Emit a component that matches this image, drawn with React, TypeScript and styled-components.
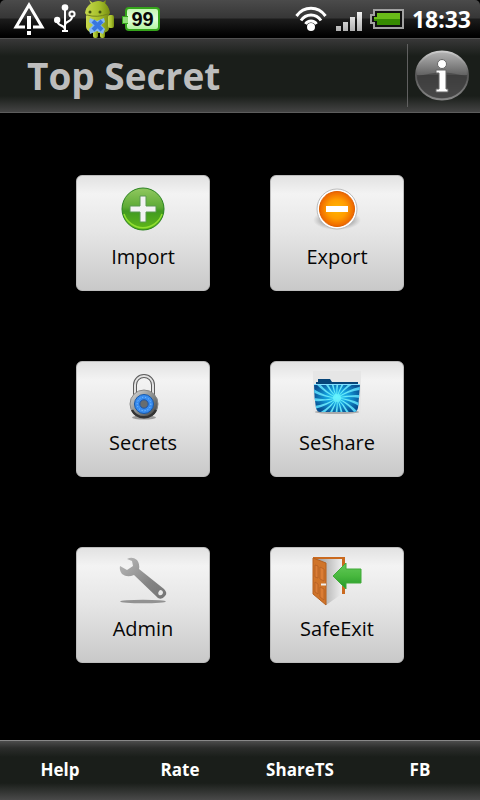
import React from "react";
import styled, { createGlobalStyle } from "styled-components";

const GlobalStyle = createGlobalStyle`
  * { box-sizing: border-box; }
  body { margin: 0; background: #000; font-family: "Open Sans", "Noto Sans", sans-serif; }
`;

const Screen = styled.div`
  display: flex;
  flex-direction: column;
  min-height: 100vh;
  background: #000;
`;

const StatusBar = styled.div`
  display: flex;
  align-items: center;
  justify-content: space-between;
  height: 38px;
  padding: 0 9px 0 13px;
  border-radius: 5px 5px 0 0;
  background: linear-gradient(#4b4b4b 0, #363636 18px, #1c1c1c 19px, #000 36px);
`;

const StatusGroup = styled.div<{ $gap: number }>`
  display: flex;
  align-items: center;
  gap: ${(p) => p.$gap}px;
  svg { display: block; flex: none; }
`;

const Level = styled.span`
  position: relative;
  width: 35px;
  height: 24px;
  border: 2px solid #35a51b;
  border-radius: 4px;
  background: linear-gradient(#c4f5b4, #e2ffda 50%, #b3f3a2);
  color: #080808;
  font: bold 20px/20px "Liberation Sans", sans-serif;
  text-align: center;
  &::before {
    content: "";
    position: absolute;
    left: -5px;
    top: 7px;
    width: 5px;
    height: 6px;
    border: 1px solid #35a51b;
    border-right: 0;
    background: #8fdf78;
  }
`;

const Clock = styled.time`
  color: #fff;
  font: bold 23px/38px "Noto Sans", sans-serif;
`;

const TitleBar = styled.header`
  display: flex;
  align-items: center;
  justify-content: space-between;
  height: 75px;
  padding: 0 11px 0 27px;
  border-top: 1px solid #515151;
  border-bottom: 1px solid #5d5d5d;
  background: linear-gradient(#383838 0, #1a1e1a 17px, #1a1e1a 57px, #444 100%);
`;

const Title = styled.h1`
  margin: 0;
  color: #bdbdbd;
  font: bold 37px/52px "Open Sans", sans-serif;
`;

const InfoButton = styled.button`
  display: flex;
  align-items: center;
  height: 63px;
  padding: 0 0 0 7px;
  border: 0;
  border-left: 1px solid #606060;
  background: none;
`;

const Main = styled.main`
  flex: 1;
  display: grid;
  grid-template-columns: 134px 134px;
  grid-auto-rows: 116px;
  justify-content: center;
  gap: 70px 60px;
  padding: 62px 16px;
`;

const Tile = styled.button`
  display: flex;
  flex-direction: column;
  align-items: center;
  gap: 8px;
  padding: 8px 0 0;
  border: 1px solid #bdbdbd;
  border-radius: 6px;
  background: linear-gradient(#e2e2e2 0, #f3f3f3 18px, #e6e6e6 48%, #c9c9c9 100%);
  color: #060606;
  font: 20px/30px "Open Sans", sans-serif;
  svg { display: block; }
`;

const Footer = styled.nav`
  display: grid;
  grid-template-columns: repeat(4, 1fr);
  height: 60px;
  border-top: 1px solid #888;
  background: linear-gradient(#4c4c4c 0, #2b2d2b 7px, #1a1e1a 16px, #1a1e1a 42px, #4a4a4a 100%);
`;

const FooterLink = styled.a`
  color: #fff;
  font: bold 17px/58px "Open Sans", sans-serif;
  text-align: center;
  text-decoration: none;
`;

const WarningIcon = () => (
  <svg width="32" height="34" viewBox="0 0 32 34">
    <path d="M12 25H3L16 3l13 22h-9" fill="none" stroke="#fff" strokeWidth="3" />
    <path d="M14 14h4v13h-4zM14 29h4v4h-4z" fill="#fff" />
  </svg>
);

const UsbIcon = () => (
  <svg width="22" height="30" viewBox="0 0 22 30">
    <g fill="none" stroke="#fff" strokeWidth="2">
      <path d="M11 4v23M3 16c0 7 8 4 8 10M18 13c0 5-7 4-7 8" />
      <circle cx="18" cy="10" r="2.6" />
    </g>
    <g fill="#fff">
      <circle cx="11" cy="3.500" r="3.300" />
      <circle cx="3.200" cy="16" r="3.200" />
      <path d="M8 26h6v2H8z" />
    </g>
  </svg>
);

const RobotIcon = () => (
  <svg width="31" height="38" viewBox="0 0 31 38">
    <defs>
      <linearGradient id="robot" x1="0" x2="1">
        <stop offset="0" stopColor="#c7d94d" />
        <stop offset="0.6" stopColor="#a3bd29" />
        <stop offset="1" stopColor="#768c12" />
      </linearGradient>
    </defs>
    <g fill="url(#robot)">
      <path d="M4 0l4 3 1 2-2 1zM21 0l-4 3 1 3 2-1z" />
      <path d="M0 13C1 6 6 2 13 1c7 0 11 5 12 12l-3 4H3z" />
      <path d="M1 16l2-2h20l1 3v12c-1 3-4 4-11 4S2 32 1 27z" />
      <rect x="23" y="15" width="6" height="13" rx="2" />
      <rect x="8" y="29" width="5" height="9" rx="2" />
      <rect x="15" y="29" width="5" height="9" rx="2" />
    </g>
    <path d="M2 15q10 3 21-1" stroke="#74841d" fill="none" />
    <circle cx="5" cy="12" r="1.500" fill="#405010" />
    <circle cx="15" cy="12" r="1.500" fill="#405010" />
    <path d="M5 18l7 3 7-3 1 4-4 3 4 4-2 5-6-3-7 3-1-5 4-4-4-3z" fill="#86b8f5" />
    <path d="M8 21l9 9M17 21l-9 9" stroke="#3977df" strokeWidth="4" />
  </svg>
);

const WifiIcon = () => (
  <svg width="33" height="26" viewBox="0 0 33 26">
    <g fill="none" stroke="#fff" strokeWidth="3">
      <path d="M1.500 10C9-.2 23-.2 30.500 10M6 14.500c5-7.500 15-7.500 20 0M10.500 18c2.500-4 8.500-4 11 0" />
    </g>
    <circle cx="16" cy="21" r="4" fill="#fff" />
  </svg>
);

const SignalIcon = () => (
  <svg width="26" height="23" viewBox="0 0 26 23">
    <defs>
      <linearGradient id="signal" x2="0" y2="23" gradientUnits="userSpaceOnUse">
        <stop stopColor="#fff" />
        <stop offset="1" stopColor="#b0b0b0" />
      </linearGradient>
    </defs>
    <path d="M0 18h5v5H0zM7 14h5v9H7zM14 9h5v14h-5zM21 4h5v19h-5z" fill="url(#signal)" />
  </svg>
);

const BatteryIcon = () => (
  <svg width="34" height="20" viewBox="0 0 34 20">
    <path d="M4 1h29v18H4v-5H1V6h3z" fill="#101010" stroke="#a2a2a2" strokeWidth="2" />
    <path d="M7 4h23v12H7v-4H4V8h3z" fill="#368b00" />
    <path d="M7 4h23v6H4V8h3z" fill="#69bb18" />
  </svg>
);

const InfoIcon = () => (
  <svg width="54" height="51" viewBox="0 0 54 51">
    <defs>
      <linearGradient id="infoBase" x2="0" y2="1">
        <stop stopColor="#b5b5b5" />
        <stop offset="0.48" stopColor="#646464" />
        <stop offset="0.5" stopColor="#444" />
        <stop offset="1" stopColor="#5c5c5c" />
      </linearGradient>
      <linearGradient id="infoRim" x2="0" y2="1">
        <stop stopColor="#ccc" />
        <stop offset="0.5" stopColor="#555" />
        <stop offset="1" stopColor="#888" />
      </linearGradient>
    </defs>
    <ellipse cx="27" cy="25.500" rx="26" ry="24" fill="url(#infoBase)" stroke="url(#infoRim)" strokeWidth="2" />
    <path d="M2 27q25-9 50 0c-1 12-11 21-25 21S3 39 2 27z" fill="#383838" opacity=".55" />
    <g fill="#fff" stroke="#666">
      <circle cx="27" cy="14" r="4.500" />
      <path d="M21 20h10v19h2v3H21v-3h3V23h-3z" />
    </g>
  </svg>
);

const ImportIcon = () => (
  <svg width="50" height="50" viewBox="0 0 50 50">
    <defs>
      <linearGradient id="green" x2="0" y2="1">
        <stop stopColor="#91c860" />
        <stop offset="0.45" stopColor="#5eab35" />
        <stop offset="0.55" stopColor="#419a20" />
        <stop offset="1" stopColor="#61b819" />
      </linearGradient>
    </defs>
    <circle cx="25" cy="25" r="21" fill="url(#green)" stroke="#29821f" />
    <path d="M6 30a20 20 0 0 0 38 0" fill="none" stroke="#91df30" strokeWidth="1.500" />
    <path d="M22 12h6v10h10v6H28v10h-6V28H12v-6h10z" fill="#f3f3f3" stroke="#5a9951" />
  </svg>
);

const ExportIcon = () => (
  <svg width="50" height="50" viewBox="0 0 50 50">
    <defs>
      <radialGradient id="orange">
        <stop stopColor="#ffb700" />
        <stop offset="0.55" stopColor="#ff9c00" />
        <stop offset="1" stopColor="#ed6500" />
      </radialGradient>
      <radialGradient id="shade">
        <stop offset="0.6" stopColor="#777" stopOpacity=".6" />
        <stop offset="1" stopColor="#999" stopOpacity="0" />
      </radialGradient>
    </defs>
    <ellipse cx="25" cy="36" rx="24" ry="10" fill="url(#shade)" />
    <circle cx="25" cy="25" r="20" fill="#fff" stroke="#bbb" />
    <circle cx="25" cy="25" r="17.500" fill="url(#orange)" stroke="#df6000" />
    <path d="M14 22h22v6H14z" fill="#fff" />
  </svg>
);

const LockIcon = () => (
  <svg width="50" height="50" viewBox="0 0 50 50">
    <defs>
      <linearGradient id="lock" x2="1" y2="1">
        <stop stopColor="#e0e0e0" />
        <stop offset="0.55" stopColor="#818585" />
        <stop offset="1" stopColor="#353535" />
      </linearGradient>
    </defs>
    <ellipse cx="26" cy="47.500" rx="12" ry="2" fill="#999" />
    <path d="M17 27V15c0-5 4-9 9-9s9 4 9 9v12" fill="none" stroke="#5c5c5c" strokeWidth="4" />
    <path d="M17 27V15c0-5 4-9 9-9s9 4 9 9v12" fill="none" stroke="#e2e2e2" strokeWidth="2" />
    <circle cx="26" cy="34" r="14" fill="url(#lock)" stroke="#888" />
    <path d="M14 40a13.500 13.500 0 0 0 24 0" fill="none" stroke="#333" strokeWidth="2.500" />
    <circle cx="26" cy="34" r="9.500" fill="#388cf0" stroke="#1658aa" />
    <circle cx="26" cy="34" r="6.800" fill="none" stroke="#8dccff" strokeWidth="1" strokeDasharray="1 2" />
    <circle cx="26" cy="34" r="4.200" fill="#676d70" stroke="#1d55a7" />
  </svg>
);

const rays = Array.from({ length: 18 }, (_, i) => i * 20);

const FolderIcon = () => (
  <svg width="50" height="50" viewBox="0 0 50 50">
    <defs>
      <radialGradient id="folder">
        <stop stopColor="#40e8ff" />
        <stop offset="0.45" stopColor="#139ddc" />
        <stop offset="1" stopColor="#084f91" />
      </radialGradient>
      <radialGradient id="ray" cx="25" cy="28" r="28" gradientUnits="userSpaceOnUse">
        <stop stopColor="#7cffff" />
        <stop offset="1" stopColor="#43bdec" />
      </radialGradient>
      <clipPath id="front"><path d="M2 14h46q-1 15-2 24-1 4-4 4H8q-3 0-4-4Q2 27 2 14z" /></clipPath>
    </defs>
    <path d="M1 1h48v48H1z" fill="#e6e6e6" />
    <ellipse cx="25" cy="42" rx="22" ry="2" fill="#aaa" />
    <path d="M4 15v-3h2V9h12l2 3h26v4H4z" fill="#064579" />
    <g clipPath="url(#front)">
      <path d="M0 10h50v34H0z" fill="url(#folder)" />
      {rays.map((angle) => (
        <path key={angle} d="M25 28q15-5 30-2v4q-14-5-30-2" fill="url(#ray)" transform={`rotate(${angle} 25 28)`} />
      ))}
      <circle cx="25" cy="28" r="4" fill="#76faff" opacity=".6" />
    </g>
    <path d="M2 14.500h46" fill="none" stroke="#83dfff" />
  </svg>
);

const WrenchIcon = () => (
  <svg width="50" height="50" viewBox="0 0 50 50">
    <defs>
      <linearGradient id="wrench" x2="1" y2="1">
        <stop stopColor="#bbb" />
        <stop offset="0.6" stopColor="#858585" />
        <stop offset="1" stopColor="#747474" />
      </linearGradient>
    </defs>
    <ellipse cx="25" cy="45.500" rx="23" ry="1.800" fill="#929292" />
    <path fillRule="evenodd" d="M9 3q5-3 10 1 3 4 2 9l25 20q4 4 1 7-3 4-7 2L16 19q-7 3-12-1-3-4-2-8l7 4 6-4-1-5zM42 34q3 0 3 3-1 3-4 2-2-2 1-5z" fill="url(#wrench)" />
  </svg>
);

const ExitIcon = () => (
  <svg width="50" height="50" viewBox="0 0 50 50">
    <defs>
      <linearGradient id="opening">
        <stop stopColor="#999" />
        <stop offset="1" stopColor="#eee" />
      </linearGradient>
      <linearGradient id="arrow" x2="0" y2="1">
        <stop stopColor="#64c95a" />
        <stop offset="0.5" stopColor="#48b83e" />
        <stop offset="1" stopColor="#239627" />
      </linearGradient>
    </defs>
    <path d="M1 1h32v37H1z" fill="#ca6a1f" />
    <path d="M4 3h26v35L14 49z" fill="url(#opening)" />
    <path d="M1 2l13 5v42L1 38z" fill="#d07429" stroke="#b56020" />
    <path d="M3 9l3 1v12l-3-1zM8 11l4 2v12l-4-2zM3 26l3 2v10l-3-2zM8 31l4 2v11l-4-3z" fill="#db7d35" stroke="#b05c24" strokeWidth=".7" />
    <path d="M9 28.500h5" stroke="#eee" strokeWidth="2" />
    <path d="M21 20L34 7v6h15v14H34v6z" fill="url(#arrow)" stroke="#41aa38" />
  </svg>
);

const tiles = [
  { label: "Import", Icon: ImportIcon },
  { label: "Export", Icon: ExportIcon },
  { label: "Secrets", Icon: LockIcon },
  { label: "SeShare", Icon: FolderIcon },
  { label: "Admin", Icon: WrenchIcon },
  { label: "SafeExit", Icon: ExitIcon },
];

export default function App() {
  return (
    <Screen>
      <GlobalStyle />
      <StatusBar>
        <StatusGroup $gap={9}>
          <WarningIcon />
          <UsbIcon />
          <RobotIcon />
          <Level>99</Level>
        </StatusGroup>
        <StatusGroup $gap={8}>
          <WifiIcon />
          <SignalIcon />
          <BatteryIcon />
          <Clock>18:33</Clock>
        </StatusGroup>
      </StatusBar>
      <TitleBar>
        <Title>Top Secret</Title>
        <InfoButton aria-label="Information"><InfoIcon /></InfoButton>
      </TitleBar>
      <Main>
        {tiles.map(({ label, Icon }) => (
          <Tile key={label}><Icon />{label}</Tile>
        ))}
      </Main>
      <Footer>
        {["Help", "Rate", "ShareTS", "FB"].map((label) => (
          <FooterLink key={label} href="#">{label}</FooterLink>
        ))}
      </Footer>
    </Screen>
  );
}
